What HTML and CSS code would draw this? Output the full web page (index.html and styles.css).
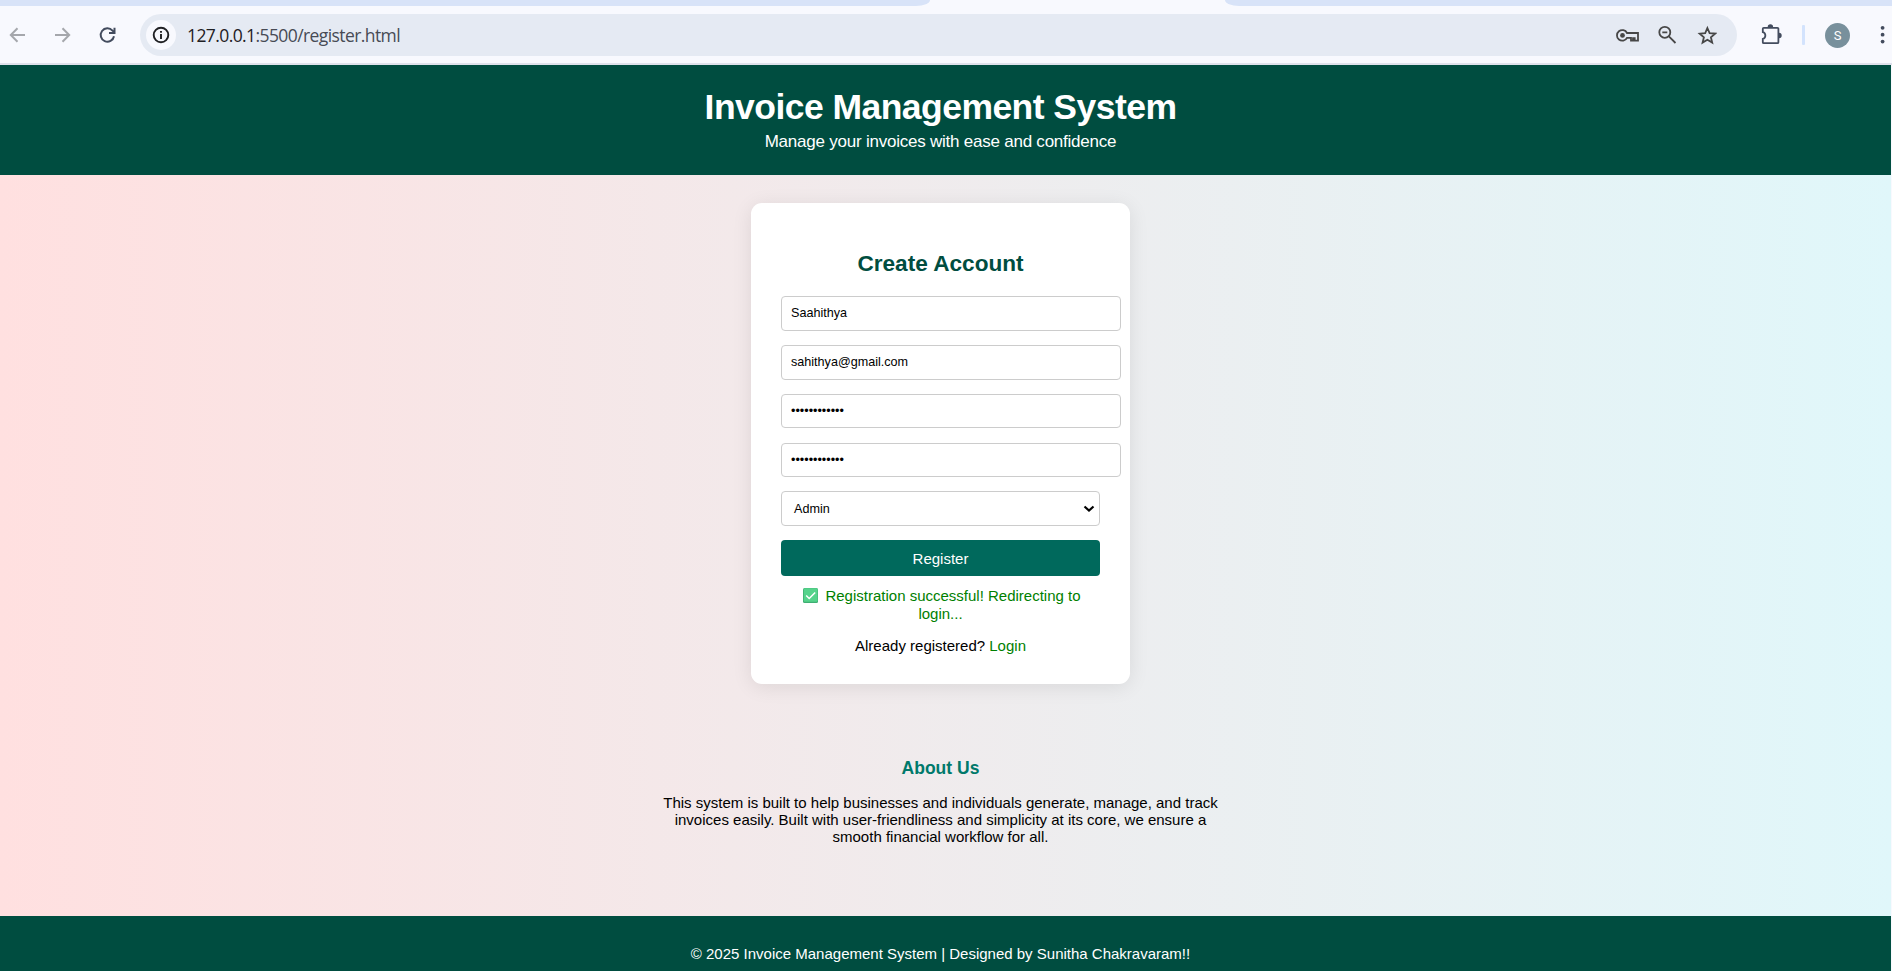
FILE: index.html
```html
<!DOCTYPE html>
<html lang="en">
<head>
<meta charset="utf-8">
<title>Register</title>
<link rel="stylesheet" href="styles.css">
</head>
<body>
<div class="browser">
  <div class="tabstrip"><span class="tab-left"></span><span class="tab-right"></span></div>
  <div class="toolbar">
    <svg class="nav dim" viewBox="0 0 20 20"><path d="M18 10H4.500M10.500 3.200 3.800 10l6.700 6.800"/></svg>
    <svg class="nav dim" viewBox="0 0 20 20"><path d="M3 10h13.500M10.500 3.200l6.700 6.800-6.700 6.800"/></svg>
    <svg class="nav" viewBox="0 0 20 20"><path d="M17 11.200A6.700 6.700 0 1 1 15.500 5.600L17.500 7.500M17.500 2.700v5.200h-5.500"/></svg>
    <div class="omnibox">
      <span class="site-info"><svg viewBox="0 0 18 18"><circle cx="9" cy="9" r="7.300"/><path d="M9 8v5M9 5v1.700"/></svg></span>
      <span class="url"><b>127.0.0.1</b>:5500/register.html</span>
      <span class="omni-icons">
        <svg width="24" height="20" viewBox="0 0 24 20"><path d="M12 8A5.300 5.300 0 1 0 12 12.800h4v2.900h2v-2.600h1.700v2.600h3.300V8z"/><circle class="fill" cx="7.500" cy="10.400" r="2.400"/></svg>
        <svg width="20" height="20" viewBox="0 0 20 20"><circle cx="6.800" cy="7.300" r="5.500"/><path d="M4.300 7.300h5M10.900 11.400l6.600 6.600"/></svg>
        <svg width="20" height="20" viewBox="0 0 20 20"><path d="m10.400 3 2.200 5.100 5.500.5-4.200 3.600 1.300 5.400-4.800-2.900-4.800 2.900 1.300-5.400-4.200-3.600 5.500-.5z"/></svg>
      </span>
    </div>
    <svg class="puzzle" viewBox="0 0 24 24"><path d="M4.800 4.800h13.600q1 0 1 1v13.400q0 1-1 1H4.800q-1 0-1-1v-3.300c3.400-.8 3.400-6 0-6.800V5.800q0-1 1-1z"/><path class="fill" d="M8.700 4a2.700 2.700 0 0 1 5.400 0zM20 9.800a2.700 2.700 0 0 1 0 5.400z"/></svg>
    <span class="divider"></span>
    <span class="avatar">S</span>
    <svg class="dots" viewBox="0 0 6 20"><circle cx="2.600" cy="2.800" r="1.900"/><circle cx="2.600" cy="9.700" r="1.900"/><circle cx="2.600" cy="16.600" r="1.900"/></svg>
  </div>
</div>
<div class="page">
  <header class="site-header">
    <h1>Invoice Management System</h1>
    <p>Manage your invoices with ease and confidence</p>
  </header>
  <main>
    <form class="card">
      <h2>Create Account</h2>
      <input type="text" value="Saahithya">
      <input type="email" value="sahithya@gmail.com">
      <input class="secret" type="password" value="abcdefghijkl">
      <input class="secret" type="password" value="abcdefghijkl">
      <div class="select"><span>Admin</span><svg viewBox="0 0 12 8"><path d="m1.500 1.500 4.500 4 4.500-4"/></svg></div>
      <button type="button">Register</button>
      <p class="message"><svg viewBox="0 0 15 15"><rect width="15" height="15" rx="1.500" fill="#3fae73"/><rect x=".8" y=".3" width="13.700" height="13.500" rx="1" fill="#55d38b"/><path d="m3.200 7.500 3 3 6-6"/></svg>Registration successful! Redirecting to<br>login...</p>
      <p class="login">Already registered? <a>Login</a></p>
    </form>
    <section class="about">
      <h3>About Us</h3>
      <p>This system is built to help businesses and individuals generate, manage, and track<br>invoices easily. Built with user-friendliness and simplicity at its core, we ensure a<br>smooth financial workflow for all.</p>
    </section>
  </main>
  <footer>© 2025 Invoice Management System | Designed by Sunitha Chakravaram!!</footer>
</div>
</body>
</html>
```
FILE: styles.css
```css
* { box-sizing: border-box; }
body { margin: 0; height: 971px; overflow: hidden; display: flex; flex-direction: column; background: #f8f9fe; font-family: "Liberation Sans", Arial, sans-serif; }
h1, h2, h3, p { margin: 0; }
svg { fill: none; stroke: #474747; stroke-width: 1.8; flex: none; }
svg .fill { fill: #474747; stroke: none; }
.browser { height: 65px; border-bottom: 2px solid #dfe1eb; }
.tabstrip { height: 6px; display: flex; justify-content: space-between; }
.tab-left, .tab-right { background: #d8e3f8; height: 6px; }
.tab-left { width: 930px; border-bottom-right-radius: 14px 6px; }
.tab-right { width: 667px; border-bottom-left-radius: 14px 6px; }
.toolbar { height: 57px; display: flex; align-items: center; padding: 1px 0 0 7px; }
.nav { width: 20px; height: 20px; margin-right: 25px; stroke: #434c5e; stroke-width: 2; }
.dim { stroke: #a5a7ac; }
.omnibox { width: 1597px; height: 42px; margin-left: -2px; border-radius: 21px; background: #e5eaf3; display: flex; align-items: center; padding-left: 6px; }
.site-info { width: 30px; height: 30px; border-radius: 50%; background: #f8f9fe; display: grid; place-items: center; }
.site-info svg { width: 18px; height: 18px; stroke: #202124; stroke-width: 1.9; }
.url { margin-left: 11px; font: 17.500px "Open Sans", "Noto Sans", sans-serif; color: #474b55; letter-spacing: -0.590px; }
.url b { font-weight: 400; color: #1f2024; }
.omni-icons { margin-left: auto; margin-right: 20px; display: flex; align-items: center; gap: 19px; }
.puzzle { width: 24px; height: 24px; margin-left: 22px; stroke: #434c5e; }
.puzzle .fill { fill: #434c5e; }
.divider { width: 3px; height: 20px; margin-left: 19px; background: #d3e3fd; border-radius: 1px; }
.avatar { width: 25px; height: 25px; margin-left: 20px; border-radius: 50%; background: #78909c; color: #fff; font: 13px/25px Roboto, sans-serif; text-align: center; }
.dots { width: 6px; height: 20px; margin-left: 30px; }
.dots circle { fill: #434c5e; stroke: none; }
.page { flex: 1; width: 1891px; display: flex; flex-direction: column; background: linear-gradient(to right, #ffe0e0, #e0f7fa); text-align: center; }
.site-header { height: 110px; padding: 22px 10px 0 0; background: #004d40; color: #fff; }
.site-header h1 { font-size: 35.500px; line-height: 41px; letter-spacing: -0.540px; }
.site-header p { font-size: 17px; line-height: 20px; margin-top: 4px; letter-spacing: -0.230px; }
main { height: 741px; padding: 28px 10px 0 0; display: flex; flex-direction: column; align-items: center; }
.card { width: 379px; height: 481px; padding: 47px 30px 0; border-radius: 11px; background: #fff; box-shadow: 0 3px 20px rgba(0,0,0,.09); display: flex; flex-direction: column; }
.card h2 { color: #004d40; font-size: 22.600px; line-height: 28px; margin-bottom: 18px; }
.card input { width: 340px; height: 35px; margin: 0 0 14px; padding: 0 9px 1px; border: 1px solid #ccc; border-radius: 4px; font: 12.600px "Liberation Sans", Arial, sans-serif; color: #000; background: #fff; }
.card input.secret { height: 34px; margin-bottom: 15px; }
.secret + .select { margin-top: -1px; }
.select { height: 35px; margin-bottom: 14px; padding: 0 4px 0 12px; border: 1px solid #ccc; border-radius: 4px; display: flex; justify-content: space-between; align-items: center; font-size: 12.600px; }
.select svg { width: 12px; height: 8px; stroke: #000; stroke-width: 2.200; }
.card button { height: 36px; border: 0; border-radius: 4px; background: #00695c; color: #fff; font: 15px "Liberation Sans", Arial, sans-serif; padding: 1px 0 0; }
.message { margin-top: 11px; font-size: 15px; line-height: 18px; color: green; }
.message svg { width: 15px; height: 15px; margin: 0 7px 0 3px; vertical-align: -2px; stroke: #fff; stroke-width: 1.500; }
.message rect { stroke: none; }
.login { margin-top: 14px; font-size: 15px; line-height: 18px; }
.login a { color: green; }
.about { margin-top: 73px; }
.about h3 { font-size: 17.500px; line-height: 22px; color: #00796b; }
.about p { margin-top: 15px; font-size: 15px; line-height: 17px; }
footer { height: 55px; padding: 29px 10px 0 0; background: #004d40; color: #fff; font-size: 15px; line-height: 18px; }
```
